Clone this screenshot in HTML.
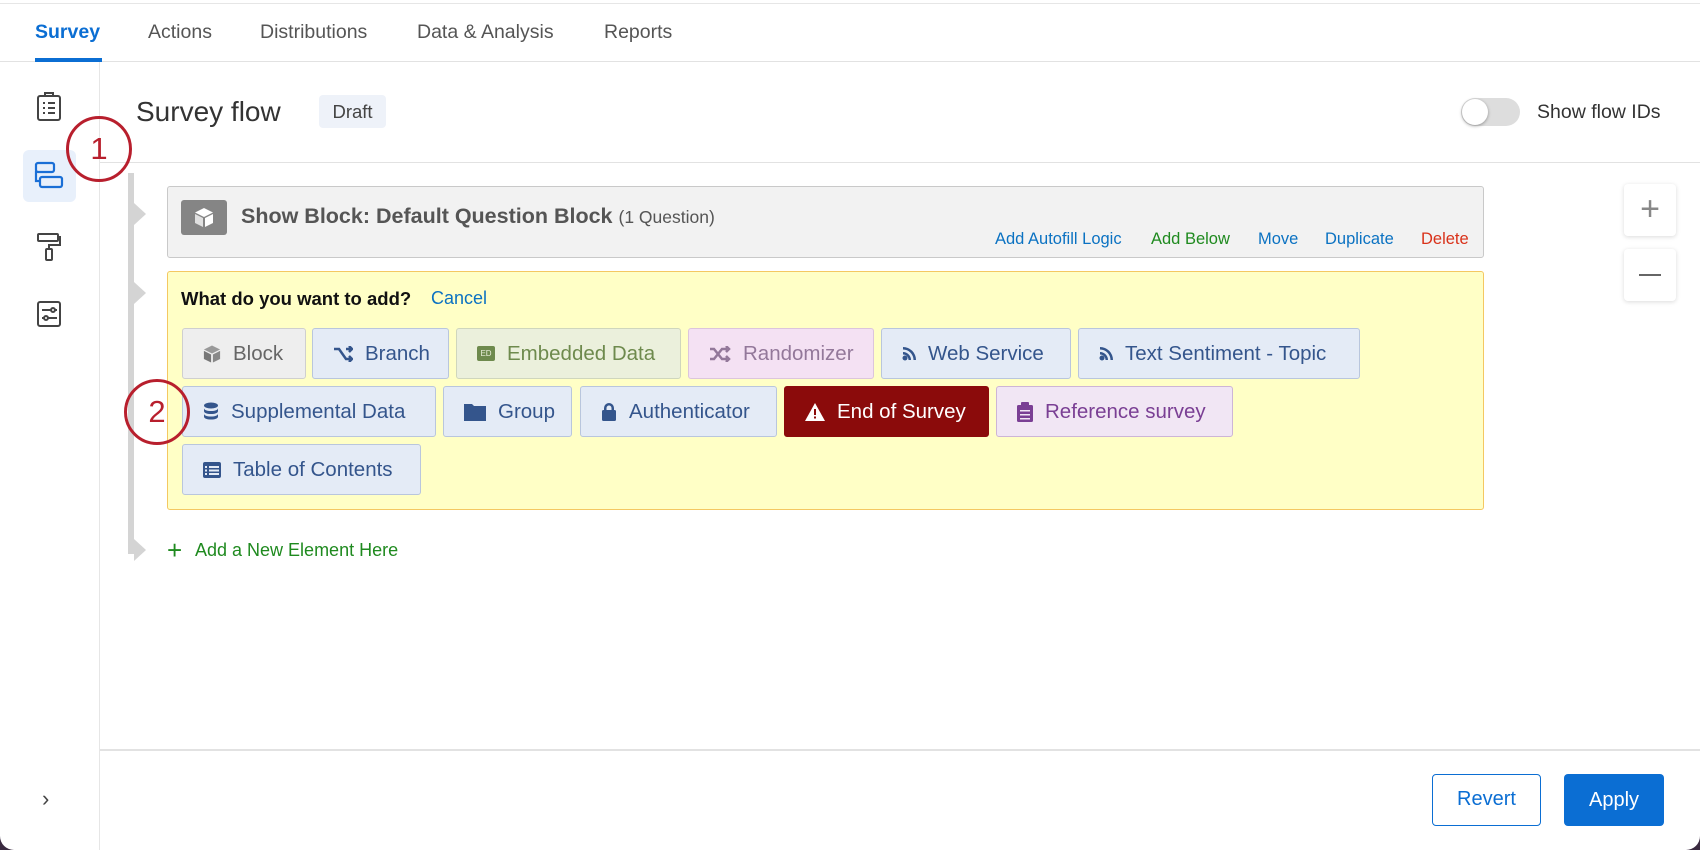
<!DOCTYPE html>
<html><head><meta charset="utf-8"><style>
*{box-sizing:border-box;margin:0;padding:0}
body{width:1700px;height:850px;overflow:hidden;background:#3a2a40;font-family:"Liberation Sans",sans-serif;position:relative}
.page{position:absolute;left:0;top:0;width:1700px;height:850px;background:#fff;border-radius:0 0 14px 14px;overflow:hidden}
.abs{position:absolute}
.tab{position:absolute;top:21px;font-size:19.5px;color:#555}
.btn{position:absolute;height:51px;border-radius:3px;font-size:20.5px;display:flex;align-items:center;padding-left:20px;border:1px solid #b9c6dd;background:#e4ebf6;color:#34558c}
.btn svg{margin-right:12px}
.lnk{position:absolute;top:230px;font-size:16.5px}
.circ{position:absolute;width:66px;height:66px;border:3.5px solid #b81f2d;border-radius:50%;color:#b81f2d;font-size:31px;display:flex;align-items:center;justify-content:center;background:transparent}
.arrow{position:absolute;left:134px;width:0;height:0;border-top:11px solid transparent;border-bottom:11px solid transparent;border-left:12px solid #d4d4d4}
.arrow:before{content:"";position:absolute;left:-18px;top:-4px;width:8px;height:8px;background:#d4d4d4}
</style></head><body><div class="page">
<div class="abs" style="left:0;top:3px;width:1700px;height:1px;background:#e6e6e6"></div>
<div class="tab" style="left:35px;color:#0b6ed3;font-weight:bold">Survey</div>
<div class="tab" style="left:148px">Actions</div>
<div class="tab" style="left:260px">Distributions</div>
<div class="tab" style="left:417px">Data &amp; Analysis</div>
<div class="tab" style="left:604px">Reports</div>
<div class="abs" style="left:0;top:61px;width:1700px;height:1px;background:#e2e2e2"></div>
<div class="abs" style="left:35px;top:58px;width:67px;height:4px;background:#0b6ed3"></div>
<!-- sidebar -->
<div class="abs" style="left:99px;top:62px;width:1px;height:788px;background:#e6e6e6"></div>
<svg class="abs" style="left:36px;top:91px" width="26" height="30" viewBox="0 0 26 30" fill="none" stroke="#444" stroke-width="2"><rect x="2" y="5" width="22" height="24" rx="2"/><path d="M9 5V2h8v3M7 12h2M12 12h7M7 17h2M12 17h7M7 22h2M12 22h7"/></svg>
<div class="abs" style="left:23px;top:150px;width:53px;height:52px;background:#e8f0fb;border-radius:6px"></div>
<svg class="abs" style="left:34px;top:161px" width="30" height="30" viewBox="0 0 30 30" fill="none" stroke="#1a6fd6" stroke-width="2.2"><rect x="2" y="2" width="18" height="9" rx="2"/><rect x="6" y="16" width="22" height="10" rx="2"/><path d="M2 10v10h4"/></svg>
<svg class="abs" style="left:36px;top:232px" width="26" height="30" viewBox="0 0 26 30" fill="none" stroke="#444" stroke-width="2"><rect x="2" y="2" width="20" height="7" rx="1"/><path d="M22 5h2v8H13v4"/><rect x="10" y="17" width="6" height="11" rx="1"/></svg>
<svg class="abs" style="left:36px;top:300px" width="26" height="28" viewBox="0 0 26 28" fill="none" stroke="#444" stroke-width="2"><rect x="2" y="2" width="22" height="24" rx="2"/><path d="M6 10h9M19 10h2M6 18h2M12 18h9"/><circle cx="17" cy="10" r="2"/><circle cx="10" cy="18" r="2"/></svg>
<div class="abs" style="left:42px;top:786px;font-size:22px;color:#444">&#8250;</div>
<!-- header -->
<div class="abs" style="left:136px;top:96px;font-size:28px;color:#333">Survey flow</div>
<div class="abs" style="left:319px;top:95px;width:67px;height:33px;background:#eef2f9;border-radius:4px;font-size:18.5px;color:#444;text-align:center;line-height:33px">Draft</div>
<div class="abs" style="left:1461px;top:98px;width:59px;height:28px;border-radius:14px;background:#ddd"></div>
<div class="abs" style="left:1462px;top:99px;width:26px;height:26px;border-radius:50%;background:#fff;box-shadow:0 1px 3px rgba(0,0,0,.35)"></div>
<div class="abs" style="left:1537px;top:101px;font-size:19.5px;color:#333">Show flow IDs</div>
<div class="abs" style="left:100px;top:162px;width:1600px;height:1px;background:#e2e2e2"></div>
<!-- flow line -->
<div class="abs" style="left:128px;top:173px;width:6px;height:380px;background:#d4d4d4"></div>
<div class="arrow" style="top:203px"></div>
<div class="arrow" style="top:282px"></div>
<div class="arrow" style="top:539px"></div>
<!-- block -->
<div class="abs" style="left:167px;top:186px;width:1317px;height:72px;background:#f2f2f2;border:1px solid #c9c9c9;border-radius:3px"></div>
<div class="abs" style="left:181px;top:200px;width:46px;height:35px;background:#858585;border-radius:3px"></div>
<svg class="abs" style="left:194px;top:207px" width="20" height="21" viewBox="0 0 20 21"><path d="M10 1 19 5.5 10 10 1 5.5Z" fill="#fff"/><path d="M1 7 9 11v9L1 16Z" fill="#e0e0e0"/><path d="M19 7 11 11v9l8-4Z" fill="#fff"/></svg>
<div class="abs" style="left:241px;top:204px;font-size:21.5px;color:#555"><b>Show Block: Default Question Block</b> <span style="font-size:17.5px">(1 Question)</span></div>
<div class="lnk" style="left:995px;color:#0b72c2">Add Autofill Logic</div>
<div class="lnk" style="left:1151px;color:#1f8a1f">Add Below</div>
<div class="lnk" style="left:1258px;color:#0b72c2">Move</div>
<div class="lnk" style="left:1325px;color:#0b72c2">Duplicate</div>
<div class="lnk" style="left:1421px;color:#d9321a">Delete</div>
<!-- yellow -->
<div class="abs" style="left:167px;top:271px;width:1317px;height:239px;background:#ffffc6;border:1.5px solid #f4c862;border-radius:3px"></div>
<div class="abs" style="left:181px;top:288px;font-size:18.5px;font-weight:bold;color:#111">What do you want to add?</div>
<div class="abs" style="left:431px;top:288px;font-size:18px;color:#0b72c2">Cancel</div>
<div class="btn" style="left:182px;top:328px;width:124px;background:#eeeeee;border-color:#cfcfcf;color:#666"><svg width="18" height="20" viewBox="0 0 20 21"><path d="M10 1 19 5.5 10 10 1 5.5Z" fill="#999"/><path d="M1 7 9 11v9L1 16Z" fill="#777"/><path d="M19 7 11 11v9l8-4Z" fill="#888"/></svg>Block</div>
<div class="btn" style="left:312px;top:328px;width:137px"><svg width="20" height="16" viewBox="0 0 20 16" fill="none" stroke="#34558c" stroke-width="2.5"><path d="M1 3h5l7 10h5M13 3h5M16 0l3 3-3 3M16 10l3 3-3 3"/></svg>Branch</div>
<div class="btn" style="left:456px;top:328px;width:225px;background:#ebf0dc;border-color:#cfd6bd;color:#6e8a4d"><span style="display:inline-block;width:18px;height:15px;background:#6e8a4d;color:#ebf0dc;font-size:8px;line-height:15px;text-align:center;margin-right:12px;border-radius:2px">ED</span>Embedded Data</div>
<div class="btn" style="left:688px;top:328px;width:186px;background:#f4e1f3;border-color:#dcc5dc;color:#93789a"><svg width="22" height="16" viewBox="0 0 22 16" fill="none" stroke="#93789a" stroke-width="2.5"><path d="M1 3h4l8 10h5M1 13h4l8-10h5M17 0l3 3-3 3M17 10l3 3-3 3"/></svg>Randomizer</div>
<div class="btn" style="left:881px;top:328px;width:190px"><svg width="14" height="14" viewBox="0 0 14 14" fill="#34558c"><circle cx="3" cy="11" r="2.5"/><path d="M1 5a8 8 0 0 1 8 8h-2.5A5.5 5.5 0 0 0 1 7.5ZM1 0a13 13 0 0 1 13 13h-2.5A10.5 10.5 0 0 0 1 2.5Z"/></svg>Web Service</div>
<div class="btn" style="left:1078px;top:328px;width:282px"><svg width="14" height="14" viewBox="0 0 14 14" fill="#34558c"><circle cx="3" cy="11" r="2.5"/><path d="M1 5a8 8 0 0 1 8 8h-2.5A5.5 5.5 0 0 0 1 7.5ZM1 0a13 13 0 0 1 13 13h-2.5A10.5 10.5 0 0 0 1 2.5Z"/></svg>Text Sentiment - Topic</div>
<div class="btn" style="left:182px;top:386px;width:254px"><svg width="16" height="20" viewBox="0 0 16 20" fill="#34558c"><ellipse cx="8" cy="3.5" rx="7" ry="3"/><path d="M1 6c0 2 3 3 7 3s7-1 7-3v3c0 2-3 3-7 3S1 11 1 9ZM1 11.5c0 2 3 3 7 3s7-1 7-3v3c0 2-3 3-7 3s-7-1-7-3Z"/></svg>Supplemental Data</div>
<div class="btn" style="left:443px;top:386px;width:129px"><svg width="22" height="19" viewBox="0 0 22 19" fill="#34558c"><path d="M0 2h8l2 2h12v15H0Z"/></svg>Group</div>
<div class="btn" style="left:580px;top:386px;width:197px"><svg width="16" height="19" viewBox="0 0 16 19" fill="#34558c"><path d="M3 8V6a5 5 0 0 1 10 0v2h-2.5V6a2.5 2.5 0 0 0-5 0v2Z"/><rect x="1" y="8" width="14" height="11" rx="1.5"/></svg>Authenticator</div>
<div class="btn" style="left:784px;top:386px;width:205px;background:#8b0b0b;border-color:#8b0b0b;color:#fff"><svg width="20" height="18" viewBox="0 0 20 18"><path d="M10 0 20 18H0Z" fill="#fff"/><path d="M9 6h2v6H9ZM9 13.5h2v2H9Z" fill="#8b0b0b"/></svg>End of Survey</div>
<div class="btn" style="left:996px;top:386px;width:237px;background:#f1e6f4;border-color:#cdb5d6;color:#7a3f94"><svg width="16" height="20" viewBox="0 0 16 20" fill="#7a3f94"><rect x="0" y="3" width="16" height="17" rx="1.5"/><rect x="4" y="0" width="8" height="4" rx="1"/><path d="M3 8h10v1.5H3ZM3 12h10v1.5H3ZM3 16h10v1.5H3Z" fill="#f1e6f4"/></svg>Reference survey</div>
<div class="btn" style="left:182px;top:444px;width:239px"><svg width="18" height="16" viewBox="0 0 18 16" fill="#34558c"><rect width="18" height="16" rx="2"/><path d="M2 4h2v2H2ZM6 4h10v2H6ZM2 7.5h2v2H2ZM6 7.5h10v2H6ZM2 11h2v2H2ZM6 11h10v2H6Z" fill="#e4ebf6"/></svg>Table of Contents</div>
<!-- add new -->
<div class="abs" style="left:167px;top:537px;font-size:26px;color:#1f8a1f;line-height:26px">+</div>
<div class="abs" style="left:195px;top:540px;font-size:18px;color:#1f8a1f">Add a New Element Here</div>
<!-- circles -->
<div class="circ" style="left:66px;top:116px">1</div>
<div class="circ" style="left:124px;top:379px">2</div>
<!-- zoom -->
<div class="abs" style="left:1624px;top:184px;width:52px;height:52px;background:#fff;border-radius:4px;box-shadow:0 1px 5px rgba(0,0,0,.15);color:#888;font-size:34px;text-align:center;line-height:50px;font-weight:300">+</div>
<div class="abs" style="left:1624px;top:249px;width:52px;height:52px;background:#fff;border-radius:4px;box-shadow:0 1px 5px rgba(0,0,0,.15)"><div style="position:absolute;left:15px;top:25px;width:22px;height:2px;background:#666"></div></div>
<!-- footer -->
<div class="abs" style="left:100px;top:749px;width:1600px;height:2px;background:#e2e2e2"></div>
<div class="abs" style="left:1432px;top:774px;width:109px;height:52px;border:1.5px solid #0b6ed3;border-radius:4px;color:#0b6ed3;font-size:20px;text-align:center;line-height:49px">Revert</div>
<div class="abs" style="left:1564px;top:774px;width:100px;height:52px;background:#0b6ed3;border-radius:4px;color:#fff;font-size:20px;text-align:center;line-height:52px">Apply</div>
</div></body></html>
